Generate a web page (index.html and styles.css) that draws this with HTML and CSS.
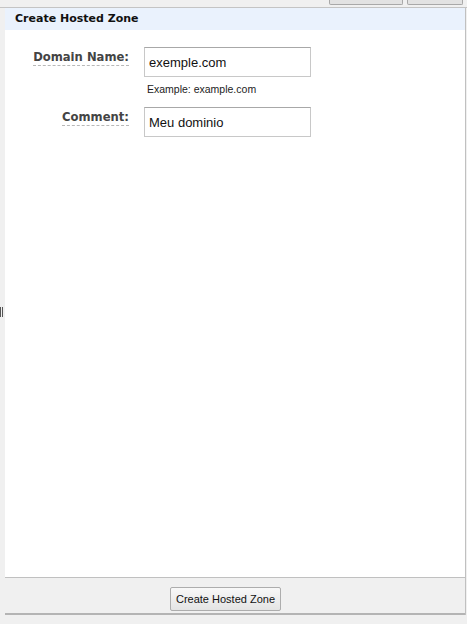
FILE: index.html
```html
<!DOCTYPE html>
<html>
<head>
<meta charset="utf-8">
<link rel="stylesheet" href="styles.css">
</head>
<body>
<div class="topbar">
  <span class="peek-btn peek-a"></span>
  <span class="peek-btn peek-b"></span>
</div>
<div class="layout">
  <div class="grip"><span></span><span></span></div>
  <div class="panel">
    <div class="panel-header">Create Hosted Zone</div>
    <div class="panel-body">
      <div class="form-row">
        <div class="label-cell"><span class="label">Domain Name:</span></div>
        <div class="field-cell">
          <input class="text-input" type="text" value="exemple.com">
          <div class="hint">Example: example.com</div>
        </div>
      </div>
      <div class="form-row">
        <div class="label-cell"><span class="label">Comment:</span></div>
        <div class="field-cell">
          <input class="text-input" type="text" value="Meu dominio">
        </div>
      </div>
    </div>
    <div class="panel-footer">
      <button class="btn">Create Hosted Zone</button>
    </div>
  </div>
  <div class="right-gap"></div>
</div>
</body>
</html>
```
FILE: styles.css
```css
html, body {
  margin: 0;
  padding: 0;
  height: 100%;
}
body {
  background: #f0f0f0;
  font-family: "Liberation Sans", Arial, sans-serif;
  overflow: hidden;
}
.topbar {
  height: 7px;
  border-bottom: 1px solid #c4c4c4;
  display: flex;
  justify-content: flex-end;
  align-items: flex-start;
  padding-right: 4px;
  gap: 4px;
}
.peek-btn {
  display: block;
  height: 4px;
  border: 1px solid #a8a8a8;
  border-top: none;
  border-radius: 0 0 2px 2px;
  background: #e2e2e2;
}
.peek-a { width: 72px; }
.peek-b { width: 54px; }
.layout {
  display: flex;
  height: 607px;
}
.grip {
  width: 5px;
  display: flex;
  align-items: center;
  gap: 1px;
  box-sizing: border-box;
}
.grip span {
  display: block;
  width: 1px;
  height: 10px;
  background: #555;
}
.panel {
  width: 461px;
  display: flex;
  flex-direction: column;
  border-right: 1px solid #c0c0c0;
  height: 607px;
  box-sizing: border-box;
}
.panel-header {
  height: 22px;
  background: #eaf2fd;
  padding-left: 10px;
  font-family: "DejaVu Sans", Verdana, sans-serif;
  font-weight: bold;
  font-size: 11px;
  line-height: 22px;
  color: #111;
}
.panel-body {
  background: #fff;
  height: 547px;
  padding-top: 17px;
  box-sizing: border-box;
}
.form-row {
  display: flex;
  margin-bottom: 11px;
}
.label-cell {
  width: 139px;
  text-align: right;
  padding-right: 15px;
  box-sizing: border-box;
}
.label {
  display: inline-block;
  font-family: "DejaVu Sans", Verdana, sans-serif;
  font-weight: bold;
  font-size: 11.6px;
  color: #444;
  line-height: 15px;
  border-bottom: 1px dashed #b8b8b8;
}
.field-cell {
  display: flex;
  flex-direction: column;
}
.text-input {
  width: 167px;
  height: 30px;
  box-sizing: border-box;
  margin: 0;
  border: 1px solid #c8c8c8;
  border-top-color: #a8a8a8;
  padding: 1px 4px 0 4px;
  font-family: "Liberation Sans", Arial, sans-serif;
  font-size: 13px;
  color: #111;
  outline: none;
}
.hint {
  font-size: 10.5px;
  color: #222;
  padding-left: 3px;
  margin-top: 6px;
  line-height: 13px;
}
.panel-footer {
  border-top: 1px solid #c0c0c0;
  border-bottom: 2px solid #b4b4b4;
  height: 38px;
  box-sizing: border-box;
  background: #f0f0f0;
  display: flex;
  justify-content: flex-start;
  align-items: flex-start;
  padding-top: 9px;
  padding-left: 165px;
}
.btn {
  width: 111px;
  height: 24px;
  margin: 0;
  padding: 0;
  border: 1px solid #adadad;
  border-radius: 2px;
  background: linear-gradient(#f8f8f8, #e4e4e4);
  font-family: "Liberation Sans", Arial, sans-serif;
  font-size: 11px;
  color: #111;
}
.right-gap {
  flex: 1;
}
```
